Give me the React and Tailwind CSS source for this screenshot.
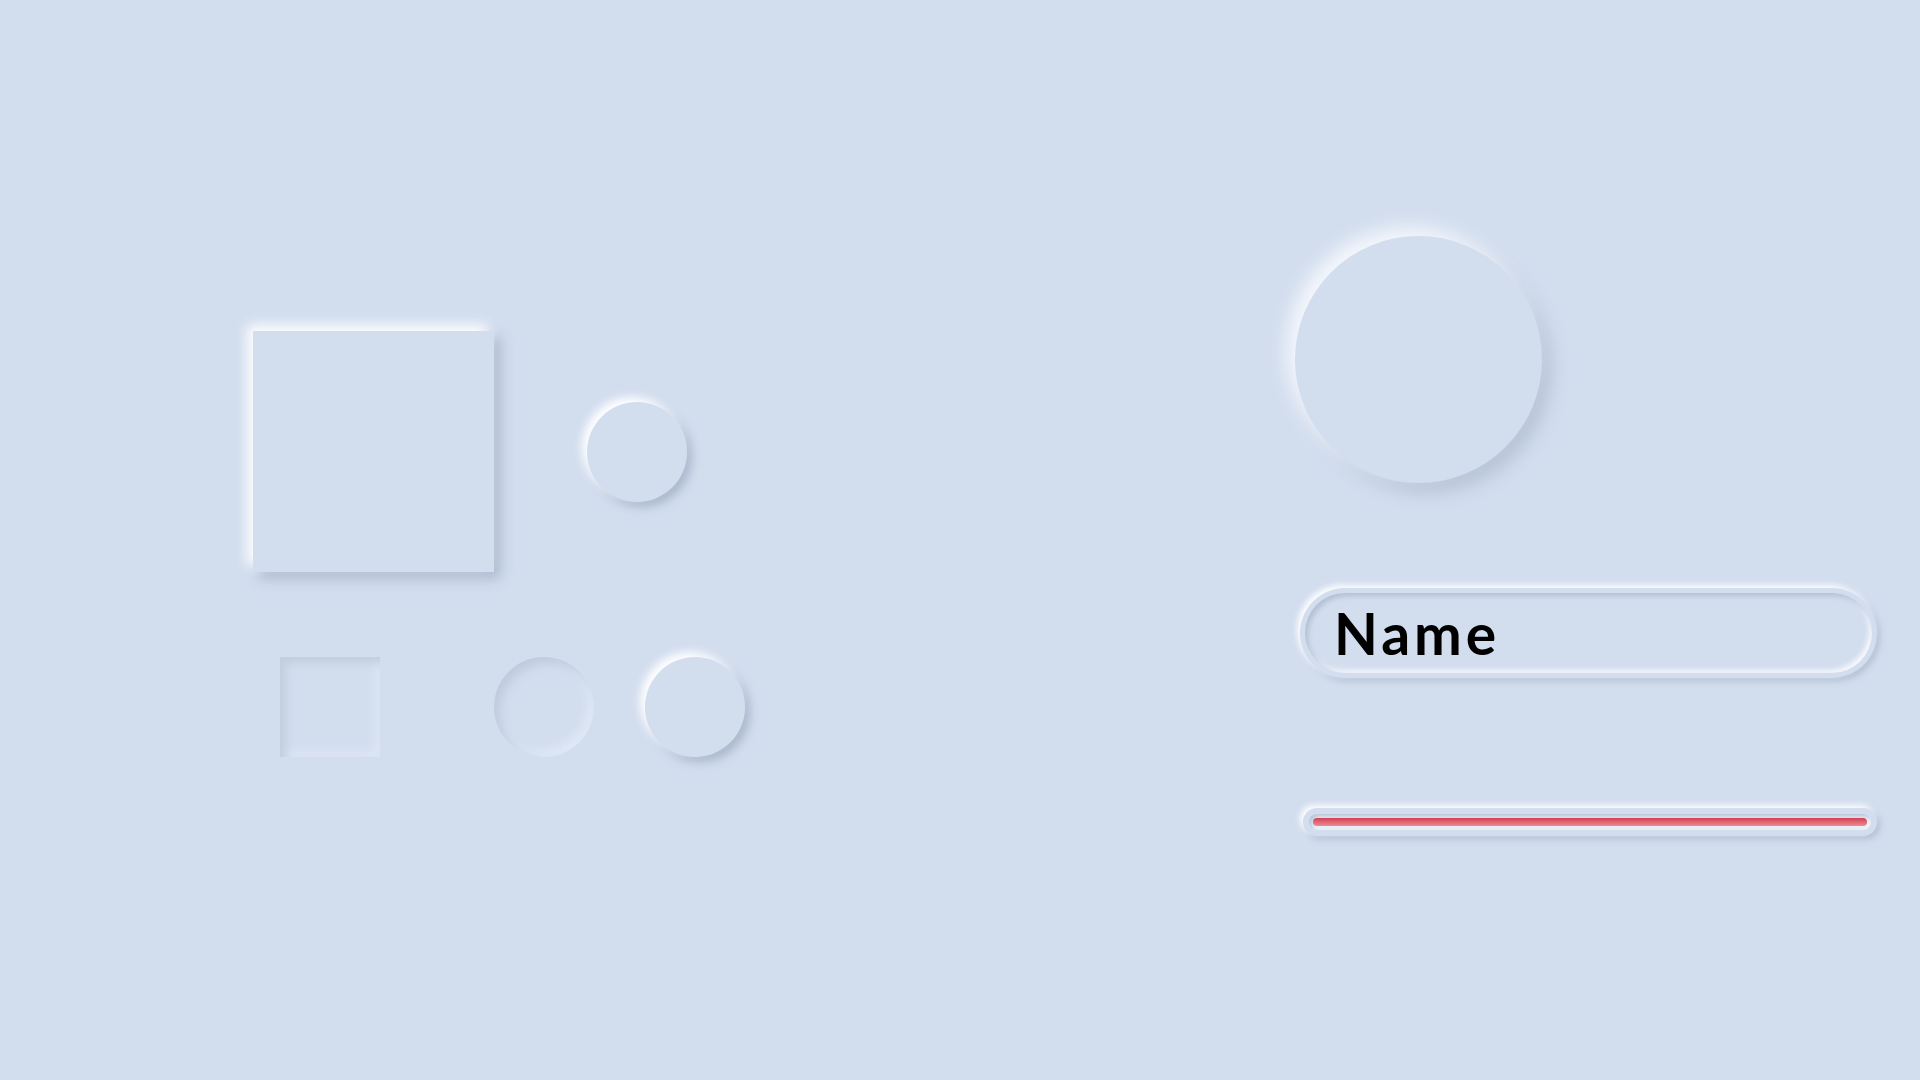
export default function App() {
  return (
    <div className="w-[1920px] h-[1080px] bg-[#d2ddee] flex overflow-hidden" style={{ fontFamily: 'Lato, "Open Sans", sans-serif' }}>
      {/* left group */}
      <div className="ml-[253px] mt-[331px] w-[1042px] flex flex-col">
        <div className="flex items-start">
          <div className="w-[241px] h-[241px] bg-[#d2ddee] shadow-[-6px_-6px_12px_#ffffff,6px_6px_12px_#a9b7cc]" />
          <div className="ml-[93px] mt-[71px] w-[100px] h-[100px] rounded-full bg-[#d2ddee] shadow-[-5px_-5px_10px_#ffffff,5px_5px_10px_#aab8cc]" />
        </div>
        <div className="flex items-start mt-[85px] ml-[27px]">
          <div className="w-[100px] h-[100px] bg-[#d2ddee] shadow-[inset_6px_6px_10px_#c2cddd,inset_-6px_-6px_10px_#dde6f4]" />
          <div className="ml-[114px] w-[100px] h-[100px] rounded-full bg-[#d2ddee] shadow-[inset_6px_6px_10px_#c0cbdc,inset_-6px_-6px_10px_#dfe8f5]" />
          <div className="ml-[51px] w-[100px] h-[100px] rounded-full bg-[#d2ddee] shadow-[-5px_-5px_10px_#ffffff,5px_5px_10px_#aab8cc]" />
        </div>
      </div>
      {/* right group */}
      <div className="mt-[236px] flex flex-col">
        <div className="w-[247px] h-[247px] rounded-full bg-[#d2ddee] shadow-[-9px_-9px_18px_#f4f7fc,9px_9px_18px_#b6c3d6]" />
        <div className="mt-[105px] ml-[5px] w-[577px] h-[90px] rounded-full bg-[#d2ddee] p-[5px] shadow-[-3px_-3px_6px_#ffffff,3px_3px_6px_#b3c0d3]">
          <div className="w-full h-full rounded-full bg-[#d2ddee] flex items-center pl-[29px] shadow-[inset_3px_3px_5px_#b3c0d3,inset_-3px_-3px_5px_#f7f9fd]">
            <span className="text-[57px] font-bold text-black leading-none tracking-[0.07em]">Name</span>
          </div>
        </div>
        <div className="mt-[130px] ml-[8px] w-[574px] h-[28px] rounded-full bg-[#d2ddee] p-[6px] shadow-[-3px_-3px_6px_#ffffff,3px_3px_6px_#b3c0d3]">
          <div className="w-full h-full rounded-full bg-[#e4ebf6] flex items-center px-[4px] shadow-[inset_2px_2px_4px_#b3c0d3,inset_-2px_-2px_4px_#f3f6fb]">
            <div className="w-full h-[8px] rounded-full bg-gradient-to-b from-[#d43d52] to-[#ea8a96]" />
          </div>
        </div>
      </div>
    </div>
  );
}
